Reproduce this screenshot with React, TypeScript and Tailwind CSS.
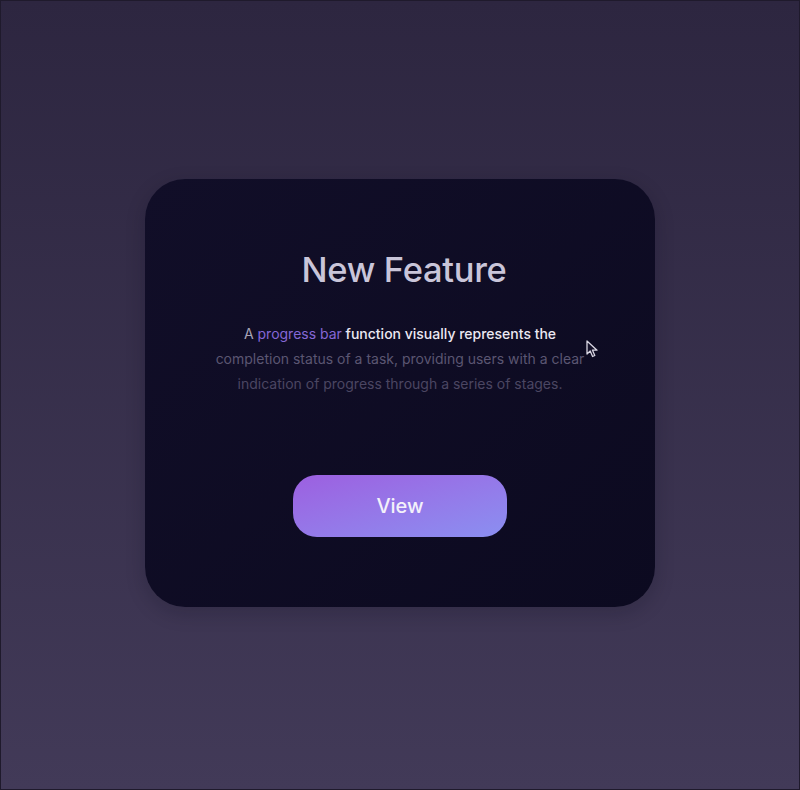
import React from "react";

const Cursor: React.FC = () => (
  <svg width="13" height="18" viewBox="0 0 13 18" className="absolute left-[585px] top-[339px]">
    <path
      d="M1 1 L1 14 L4.2 11 L6.6 16.5 L8.8 15.5 L6.5 10.2 L11 10.2 Z"
      fill="#15122a"
      stroke="#d8d5e2"
      strokeWidth="1.3"
      strokeLinejoin="round"
    />
  </svg>
);

export default function App() {
  return (
    <div
      className="relative w-[800px] h-[790px] overflow-hidden border border-[#1f1a2c] bg-gradient-to-b from-[#2d2640] to-[#423a58] flex justify-center pt-[178px]"
      style={{ fontFamily: "Inter, 'Noto Sans', sans-serif" }}
    >
      {/* Card */}
      <div className="w-[510px] h-[428px] rounded-[40px] bg-gradient-to-br from-[#110e28] to-[#0c0a20] flex flex-col items-center pt-[70px] shadow-[0_6px_20px_rgba(10,8,25,0.2)]">
        <h1 className="ml-[8px] text-[34.5px] leading-[41px] font-medium tracking-[-0.3px] text-[#c9c5d9]">
          New Feature
        </h1>

        <p className="mt-[31px] text-[14px] leading-[25px] text-center">
          <span className="text-[#a7a3b6]">A </span>
          <span className="text-[#8567d6]">progress bar</span>
          <span className="text-[#ebe8f2] font-medium"> function visually represents the</span>
          <br />
          <span className="text-[#5b5672]">completion status of a task, providing users with a clear</span>
          <br />
          <span className="text-[#4b4662]">indication of progress through a series of stages.</span>
        </p>

        {/* Button */}
        <button className="mt-[79px] w-[214px] h-[62px] rounded-[24px] bg-gradient-to-br from-[#9c5fe0] to-[#8a8ff1] text-[20px] font-medium text-[#f3f1fa]">
          View
        </button>
      </div>

      <Cursor />
    </div>
  );
}
